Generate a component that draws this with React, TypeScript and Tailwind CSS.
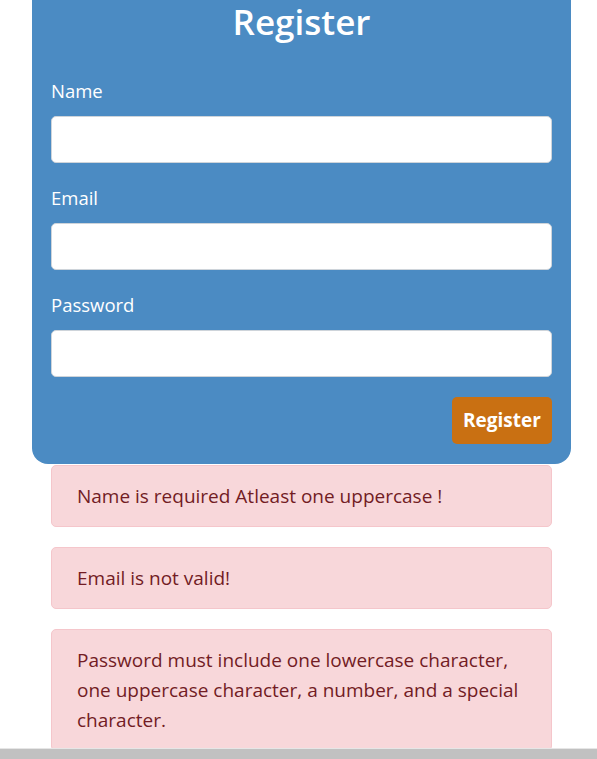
const font = { fontFamily: '"Open Sans", "Noto Sans", sans-serif' };

function Field({ label, type }: { label: string; type: string }) {
  return (
    <div className="mb-[20px] flex flex-col">
      <label className="mb-[10px] text-[18.5px] leading-[30px] text-white">{label}</label>
      <input
        type={type}
        className="h-[47px] w-full rounded-[5px] border border-[#ced4da] bg-white px-[15px] text-[19px] outline-none"
      />
    </div>
  );
}

function Alert({ children }: { children: React.ReactNode }) {
  return (
    <div className="mb-[20px] rounded-[5px] border border-[#f5c6cb] bg-[#f8d7da] px-[25px] py-[15px] text-[19px] leading-[30px] text-[#721c24]">
      {children}
    </div>
  );
}

export default function App() {
  return (
    <div className="h-[759px] overflow-hidden bg-white" style={font}>
      <div className="ml-[32px] w-[539px]">
        <form className="rounded-b-[16px] bg-[#4b8bc3] px-[19px] pb-[20px]">
          <h2 className="mb-[34px] pt-[2px] text-center text-[35px] font-semibold leading-[40px] text-white">Register</h2>
          <Field label="Name" type="text" />
          <Field label="Email" type="email" />
          <Field label="Password" type="password" />
          <div className="flex justify-end">
            <button
              type="button"
              className="h-[47px] w-[100px] rounded-[5px] bg-[#c97012] text-[19px] font-bold text-white"
            >
              Register
            </button>
          </div>
        </form>
        <div className="mt-px px-[19px]">
          <Alert>Name is required Atleast one uppercase !</Alert>
          <Alert>Email is not valid!</Alert>
          <Alert>
            Password must include one lowercase character, one uppercase character, a number, and a special
            character.
          </Alert>
        </div>
      </div>
      <div className="fixed bottom-0 left-0 right-0 h-[11px] border-t border-[#e6e6e6] bg-[#c1c1c1]" />
    </div>
  );
}
